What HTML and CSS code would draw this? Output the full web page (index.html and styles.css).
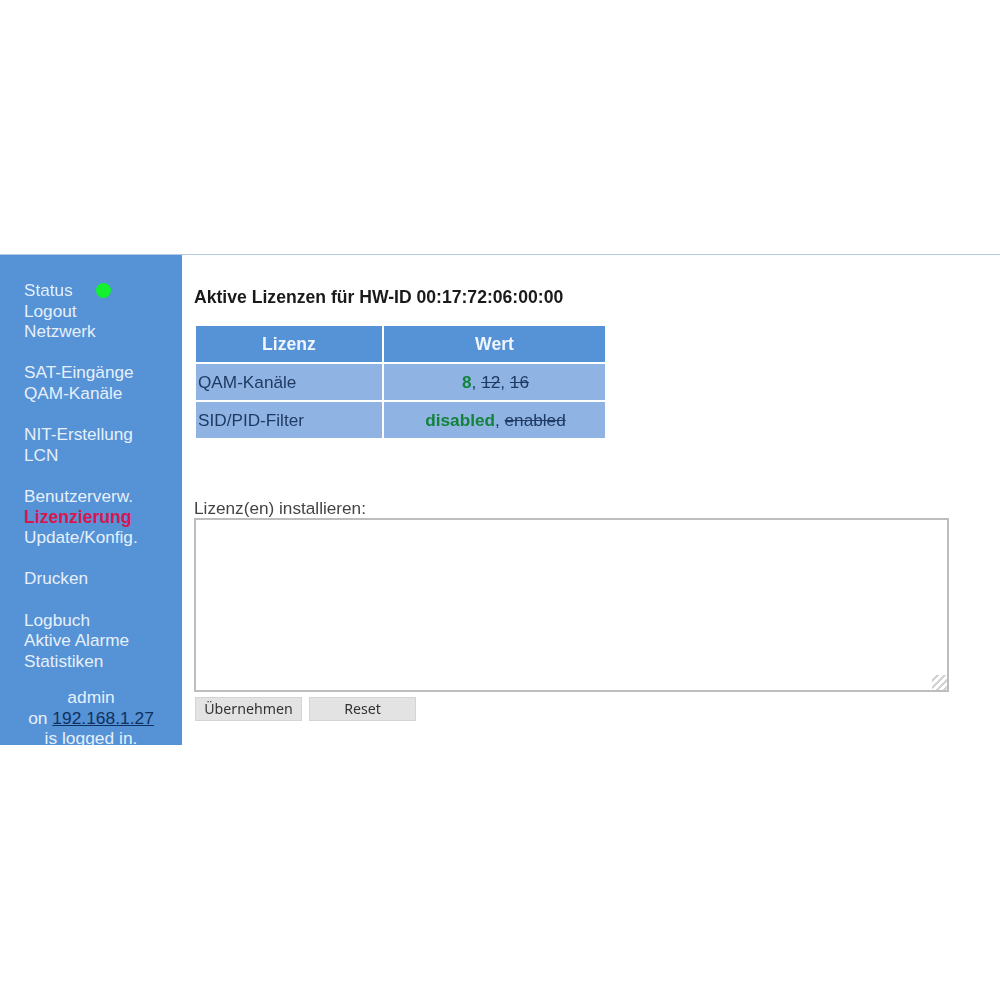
FILE: index.html
```html
<!DOCTYPE html>
<html lang="de">
<head>
    <meta charset="UTF-8">
    <title>Lizenzierung</title>
    <link rel="stylesheet" href="styles.css">
</head>
<body>
    <div class="frame">
        <nav class="sidebar">
            <div class="menu">
                <a class="status">Status<span class="led"></span></a>
                <a>Logout</a>
                <a>Netzwerk</a>
                <br>
                <a>SAT-Eingänge</a>
                <a>QAM-Kanäle</a>
                <br>
                <a>NIT-Erstellung</a>
                <a>LCN</a>
                <br>
                <a>Benutzerverw.</a>
                <a class="active">Lizenzierung</a>
                <a>Update/Konfig.</a>
                <br>
                <a>Drucken</a>
                <br>
                <a>Logbuch</a>
                <a>Aktive Alarme</a>
                <a>Statistiken</a>
            </div>
            <div class="user">
                admin<br>
                on <a href="#">192.168.1.27</a><br>
                is logged in.
            </div>
        </nav>
        <main class="content">
            <h1>Aktive Lizenzen für HW-ID 00:17:72:06:00:00</h1>
            <table class="licenses">
                <tr>
                    <th class="col-name">Lizenz</th>
                    <th class="col-value">Wert</th>
                </tr>
                <tr>
                    <td>QAM-Kanäle</td>
                    <td class="value"><b class="on">8</b>, <s>12</s>, <s>16</s></td>
                </tr>
                <tr>
                    <td>SID/PID-Filter</td>
                    <td class="value"><b class="on">disabled</b>, <s>enabled</s></td>
                </tr>
            </table>
            <form class="install">
                <label for="keys">Lizenz(en) installieren:</label>
                <textarea id="keys"></textarea>
                <div class="buttons">
                    <button type="button">Übernehmen</button>
                    <button type="reset">Reset</button>
                </div>
            </form>
        </main>
    </div>
</body>
</html>
```

FILE: styles.css
```css
html, body {
    margin: 0;
    padding: 0;
    height: 100%;
    background: #fff;
}

body {
    padding-top: 254px;
    box-sizing: border-box;
    font-family: "Liberation Sans", Arial, sans-serif;
    font-size: 17.2px;
    color: #222;
}

.frame {
    display: flex;
    height: 491px;
    border-top: 1px solid #b4c8e2;
    box-sizing: border-box;
    filter: blur(0.6px);
}

.sidebar {
    width: 182px;
    flex-shrink: 0;
    box-sizing: border-box;
    padding: 25px 0 0 24px;
    background: #5592d6;
    color: #e6f0fb;
    line-height: 20.6px;
    overflow: hidden;
}

.menu a {
    display: block;
}

.status {
    position: relative;
}

.led {
    position: absolute;
    left: 72px;
    top: 3px;
    width: 15px;
    height: 15px;
    border-radius: 50%;
    background: #12f02e;
}

.menu .active {
    color: #d8174f;
    font-weight: bold;
    font-size: 17.6px;
}

.user {
    margin: 16px 0 0 -24px;
    text-align: center;
    font-size: 17.4px;
}

.user a {
    color: #10305f;
    text-decoration: underline;
}

.content {
    flex: 1;
    padding: 33px 0 0 12px;
}

h1 {
    margin: 0 0 19px;
    font-size: 17.6px;
    line-height: 19px;
    color: #1a1a1a;
}

.licenses {
    width: 413px;
    border-collapse: separate;
    border-spacing: 2px;
    margin-top: -2px;
    table-layout: fixed;
    line-height: 20px;
}

.licenses th {
    height: 36px;
    padding: 0;
    background: #5592d6;
    color: #eef5fc;
    font-size: 17.6px;
}

.col-name {
    width: 186px;
}

.licenses td {
    height: 36px;
    padding: 0 0 0 2px;
    background: #8fb4e4;
    color: #1f3a63;
}

.licenses .value {
    text-align: center;
}

.on {
    color: #12833a;
}

.install {
    margin-top: 60px;
}

.install label {
    display: block;
    margin-bottom: 2px;
    line-height: 16px;
    color: #444;
}

textarea {
    display: block;
    width: 755px;
    height: 174px;
    box-sizing: border-box;
    margin: 0 0 5px;
    border: 2px solid #bdbdbd;
    background: #fff;
}

textarea::-webkit-resizer {
    background: repeating-linear-gradient(135deg, transparent 0 3px, #d2d2d2 3px 5px);
}

.buttons {
    display: flex;
    gap: 7px;
    padding-left: 1px;
}

button {
    width: 107px;
    height: 24px;
    padding: 0 0 1px;
    border: 1px solid #d4d4d4;
    background: #e3e3e3;
    font-family: "Noto Sans", "Liberation Sans", sans-serif;
    font-size: 14.2px;
    color: #333;
}
```
